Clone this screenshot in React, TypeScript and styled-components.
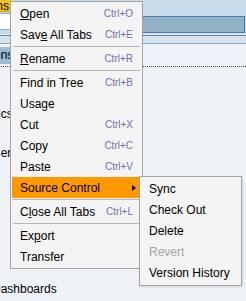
import React from 'react'
import styled, { createGlobalStyle } from 'styled-components'

const GlobalStyle = createGlobalStyle`
    html, body {
        margin: 0;
        padding: 0;
        background: #eff2f7;
    }
    body {
        font-family: "Liberation Sans", Arial, sans-serif;
    }
`

const Screen = styled.div`
    position: relative;
    width: 246px;
    height: 301px;
    overflow: hidden;
    background: #eff2f7;
    display: flex;
    flex-direction: column;
    font-size: 12px;
    color: #000;
`

const TabStrip = styled.div`
    height: 13px;
    background: #c8dbea;
    display: flex;
`

const ActiveTab = styled.div`
    height: 12px;
    width: 72px;
    margin-left: -60px;
    padding-right: 3px;
    box-sizing: border-box;
    background: #f6c21c;
    border-bottom: 1px solid #c79a12;
    text-align: right;
    line-height: 12px;
    white-space: nowrap;
    overflow: hidden;
`

const Toolbar = styled.div`
    height: 21px;
    background: #c8dbea;
    display: flex;
    align-items: flex-start;
    gap: 40px;
`

const SearchBox = styled.div`
    width: 80px;
    height: 17px;
    margin-left: -20px;
    box-sizing: border-box;
    background: #ffffff;
    border: 1px solid #9aacbf;
`

const PathBar = styled.div`
    flex: 1;
    height: 17px;
    margin-top: 3px;
    margin-right: 1px;
    box-sizing: border-box;
    background: #93b2c5;
    border: 1px solid #4d79a6;
`

const HeaderStrip = styled.div`
    height: 10px;
    background: linear-gradient(
        to bottom,
        #e0e8f0 0 1px,
        #5b87b4 1px 2px,
        #d7e2ec 2px 9px,
        #8aaed0 9px 10px
    );
`

// tree is scrolled a little to the left, so the first letters are cut off
const Tree = styled.div`
    display: flex;
    flex-direction: column;
    padding-top: 3px;
    margin-left: -27px;
`

// skip = collapsed rows hidden behind the popup, kept as row-sized space
const TreeRow = styled.div<{ level: number; skip: number; selected?: boolean }>`
    height: 19.5px;
    box-sizing: border-box;
    display: flex;
    align-items: flex-start;
    padding-left: ${p => p.level * 18}px;
    margin-top: ${p => p.skip * 19.5}px;
    border-bottom: ${p => (p.selected ? '1px dotted #2b4f7a' : 'none')};
    white-space: nowrap;
`

const TreeLabel = styled.span<{ selected?: boolean }>`
    height: 17px;
    line-height: 17px;
    padding: 0 1px;
    background: ${p => (p.selected ? '#9dbbd6' : 'transparent')};
`

const Menu = styled.div`
    position: absolute;
    left: 10px;
    top: 1px;
    width: 133px;
    box-sizing: border-box;
    padding: 1px;
    background: #f4f4f4;
    border: 1px solid #a3a3a3;
    display: flex;
    flex-direction: column;
`

const SubMenu = styled(Menu)`
    left: 139px;
    top: 176px;
    width: 103px;
    padding: 1px 1px 2px;
    box-shadow: 1px 1px 2px rgba(0, 0, 0, 0.12);
`

const Item = styled.div<{ active?: boolean; disabled?: boolean }>`
    height: 21px;
    display: flex;
    align-items: center;
    justify-content: space-between;
    padding: 0 8px 0 8px;
    background: ${p => (p.active ? '#ff9900' : 'transparent')};
    color: ${p => (p.disabled ? '#a6a6a6' : '#000')};
    white-space: nowrap;
`

const Shortcut = styled.span`
    font-size: 10px;
    color: #7070a8;
`

const Arrow = styled.span`
    width: 0;
    height: 0;
    margin-right: -3px;
    border-left: 4px solid #000;
    border-top: 3px solid transparent;
    border-bottom: 3px solid transparent;
`

const Separator = styled.div`
    height: 1px;
    margin: 1px 1px;
    background: #b8b8b8;
`

type Entry = { label: React.ReactNode; key?: string } | 'sep'

const mainItems: Entry[] = [
    { label: <><u>O</u>pen</>, key: 'Ctrl+O' },
    { label: <>Sav<u>e</u> All Tabs</>, key: 'Ctrl+E' },
    'sep',
    { label: <><u>R</u>ename</>, key: 'Ctrl+R' },
    'sep',
    { label: 'Find in Tree', key: 'Ctrl+B' },
    { label: 'Usage' },
    { label: 'Cut', key: 'Ctrl+X' },
    { label: 'Copy', key: 'Ctrl+C' },
    { label: 'Paste', key: 'Ctrl+V' },
]

const tailItems: Entry[] = [
    'sep',
    { label: <>C<u>l</u>ose All Tabs</>, key: 'Ctrl+L' },
    'sep',
    { label: <>Ex<u>p</u>ort</> },
    { label: 'Transfer' },
]

const sourceItems = ['Sync', 'Check Out', 'Delete', 'Revert', 'Version History']

const treeRows = [
    { label: 'Actions', level: 0, skip: 0, selected: true },
    { label: 'Metrics', level: 0, skip: 2 },
    { label: 'Certificates', level: 1, skip: 1 },
    { label: 'Dashboards', level: 1, skip: 6 },
]

const renderItems = (items: Entry[]) =>
    items.map((it, idx) =>
        it === 'sep' ? (
            <Separator key={'s' + idx} />
        ) : (
            <Item key={idx}>
                <span>{it.label}</span>
                {it.key && <Shortcut>{it.key}</Shortcut>}
            </Item>
        )
    )

const App = () => {
    return (
        <Screen>
            <GlobalStyle />
            <TabStrip>
                <ActiveTab>Connections</ActiveTab>
            </TabStrip>
            <Toolbar>
                <SearchBox />
                <PathBar />
            </Toolbar>
            <HeaderStrip />
            <Tree>
                {treeRows.map(row => (
                    <TreeRow key={row.label} level={row.level} skip={row.skip} selected={row.selected}>
                        <TreeLabel selected={row.selected}>{row.label}</TreeLabel>
                    </TreeRow>
                ))}
            </Tree>

            <Menu>
                {renderItems(mainItems)}
                <Item active>
                    <span>Source Control</span>
                    <Arrow />
                </Item>
                {renderItems(tailItems)}
            </Menu>

            <SubMenu>
                {sourceItems.map(label => (
                    <Item key={label} disabled={label === 'Revert'}>
                        <span>{label}</span>
                    </Item>
                ))}
            </SubMenu>
        </Screen>
    )
}

export default App
